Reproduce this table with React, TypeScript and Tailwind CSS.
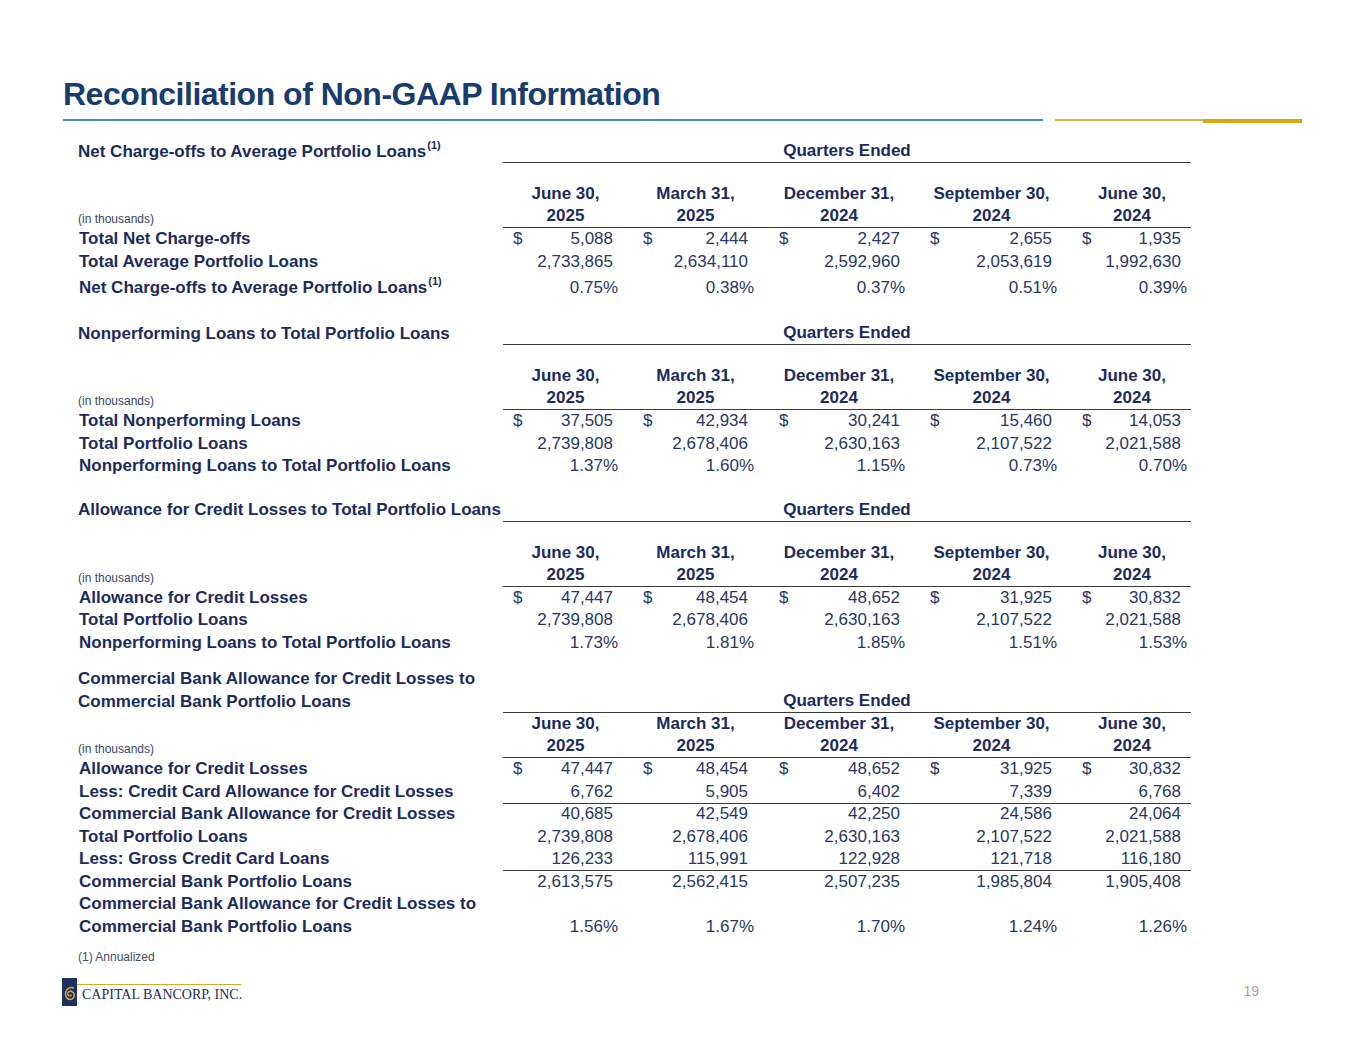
import React from 'react'

/** 表格列宽：标签列 + 5 个季度列 */
const GRID = 'grid grid-cols-[425px_125px_135px_152px_153px_123px]'

const HEADERS: [string, string][] = [
  ['June 30,', '2025'],
  ['March 31,', '2025'],
  ['December 31,', '2024'],
  ['September 30,', '2024'],
  ['June 30,', '2024'],
]

const NUM_PR = ['pr-[15px]', 'pr-[15px]', 'pr-[15px]', 'pr-[16px]', 'pr-[10px]']
const PCT_PR = ['pr-[10px]', 'pr-[9px]', 'pr-[10px]', 'pr-[11px]', 'pr-[4px]']
const DOLLAR_PL = ['pl-[10px]', 'pl-[15px]', 'pl-[16px]', 'pl-[15px]', 'pl-[14px]']
const HEAD_PL = ['pl-[0px]', 'pl-[0px]', 'pl-[0px]', 'pl-[0px]', 'pl-[5px]']

type Kind = 'dollar' | 'num' | 'pct'

interface Row {
  label: React.ReactNode
  values: string[]
  kind: Kind
  /** 行高（覆盖默认） */
  h?: string
  /** 顶部留白 */
  pt?: string
  /** 数据列下方横线 */
  rule?: boolean
  /** 两行标签，数值贴底 */
  tall?: boolean
}

const Sup = () => (
  <sup className="text-[11px] font-bold top-[-0.7em] ml-[1px]">(1)</sup>
)

const LINE = 'border-[#3a3a3a]'

function DataCell({ v, r, i }: { v: string; r: Row; i: number }) {
  return (
    <div
      className={[
        'flex justify-between text-[#2a3763]',
        r.tall ? 'items-end leading-[22.5px]' : 'items-start leading-[22px]',
        r.pt ?? '',
        r.kind === 'dollar' ? DOLLAR_PL[i] : '',
        r.kind === 'pct' ? PCT_PR[i] : NUM_PR[i],
        r.rule ? 'border-b ' + LINE : '',
      ].join(' ')}
    >
      <span>{r.kind === 'dollar' ? '$' : ''}</span>
      <span>{v}</span>
    </div>
  )
}

function Section({
  title,
  twoLineTitle,
  rows,
  rowH = 'h-[22.5px]',
  className,
}: {
  title: React.ReactNode
  twoLineTitle?: boolean
  rows: Row[]
  rowH?: string
  className?: string
}) {
  return (
    <div className={className}>
      {/* 标题行 */}
      <div className={GRID}>
        <div
          className={
            twoLineTitle
              ? 'font-bold leading-[22.5px] text-[#1d2b5c]'
              : 'font-bold leading-[22px] h-[23px] flex items-center text-[#1d2b5c] whitespace-nowrap'
          }
        >
          {title}
        </div>
        <div
          className={
            'col-span-5 self-end text-center font-bold leading-[22px] text-[#1d2b5c] border-b ' + LINE
          }
        >
          Quarters Ended
        </div>
      </div>

      {/* 日期表头 */}
      <div className={GRID + (twoLineTitle ? '' : ' mt-[20px]')}>
        <div className="flex items-end pb-[2px] text-[12px] leading-[14px] text-[#3a4568]">
          (in thousands)
        </div>
        {HEADERS.map(([a, b], i) => (
          <div
            key={i}
            className={
              'text-center font-bold leading-[22px] text-[#1d2b5c] border-b ' + LINE + ' ' + HEAD_PL[i]
            }
          >
            <div>{a}</div>
            <div>{b}</div>
          </div>
        ))}
      </div>

      {/* 数据行 */}
      {rows.map((r, ri) => (
        <div key={ri} className={GRID + ' ' + (r.tall ? '' : r.h ?? rowH)}>
          <div
            className={
              'font-bold text-[#1d2b5c] pl-[1px] whitespace-nowrap ' +
              (r.tall ? 'leading-[22.5px] ' : 'leading-[22px] ') +
              (r.pt ?? '')
            }
          >
            {r.label}
          </div>
          {r.values.map((v, i) => (
            <DataCell key={i} v={v} r={r} i={i} />
          ))}
        </div>
      ))}
    </div>
  )
}

/** 页脚 Logo */
function Logo() {
  return (
    <div className="flex items-start">
      <svg width="15" height="28" viewBox="0 0 15 28" className="shrink-0">
        <rect width="15" height="28" fill="#1f2f5e" />
        <path
          d="M11.5 10 C8.5 8.5 4.5 10.5 3.6 14.5 C2.8 18.5 5.2 21.5 8 21.5 C10.6 21.5 12.2 19.5 12.2 17.1 C12.2 14.7 10.3 13.1 8.2 13.3 C6.3 13.5 5.4 15.1 5.9 16.6 C6.4 18.1 8.4 18.3 9.2 16.9"
          fill="none"
          stroke="#d9ad2b"
          strokeWidth="1.4"
          strokeLinecap="round"
        />
      </svg>
      <div className="flex flex-col">
        <div className="h-[1px] w-[164px] bg-[#d6aa2c] mt-[6px]" />
        <div className="pl-[5px] text-[14px] leading-[20px] text-[#1e2d5a] font-['Liberation_Serif',serif] whitespace-nowrap">
          CAPITAL BANCORP, INC.
        </div>
      </div>
    </div>
  )
}

export default function App() {
  return (
    <div className="w-[1365px] h-[1055px] bg-white font-['Liberation_Sans',Arial,sans-serif] text-[17px] relative overflow-hidden">
      {/* 页面标题 */}
      <div className="pt-[76px] pl-[63px] text-[32px] leading-[36px] tracking-[-0.5px] font-bold text-[#183c6e]">
        Reconciliation of Non-GAAP Information
      </div>
      <div className="mt-[7px] flex items-start pl-[63px]">
        <div className="h-[2px] w-[980px] bg-[#4a88cc]" />
        <div className="ml-[12px] h-[2px] w-[148px] bg-[#e2b334]" />
        <div className="h-[4px] w-[99px] bg-[#d9a911]" />
      </div>

      <div className="pl-[78px]">
        <Section
          className="mt-[17px]"
          rowH="h-[23px]"
          title={
            <span>
              Net Charge-offs to Average Portfolio Loans
              <Sup />
            </span>
          }
          rows={[
            { label: 'Total Net Charge-offs', kind: 'dollar', values: ['5,088', '2,444', '2,427', '2,655', '1,935'] },
            { label: 'Total Average Portfolio Loans', kind: 'num', values: ['2,733,865', '2,634,110', '2,592,960', '2,053,619', '1,992,630'] },
            {
              label: (
                <span>
                  Net Charge-offs to Average Portfolio Loans
                  <Sup />
                </span>
              ),
              kind: 'pct',
              h: 'h-[28px]',
              pt: 'pt-[3px]',
              values: ['0.75%', '0.38%', '0.37%', '0.51%', '0.39%'],
            },
          ]}
        />

        <Section
          className="mt-[20px]"
          title="Nonperforming Loans to Total Portfolio Loans"
          rows={[
            { label: 'Total Nonperforming Loans', kind: 'dollar', values: ['37,505', '42,934', '30,241', '15,460', '14,053'] },
            { label: 'Total Portfolio Loans', kind: 'num', values: ['2,739,808', '2,678,406', '2,630,163', '2,107,522', '2,021,588'] },
            { label: 'Nonperforming Loans to Total Portfolio Loans', kind: 'pct', values: ['1.37%', '1.60%', '1.15%', '0.73%', '0.70%'] },
          ]}
        />

        <Section
          className="mt-[21px]"
          title="Allowance for Credit Losses to Total Portfolio Loans"
          rows={[
            { label: 'Allowance for Credit Losses', kind: 'dollar', values: ['47,447', '48,454', '48,652', '31,925', '30,832'] },
            { label: 'Total Portfolio Loans', kind: 'num', values: ['2,739,808', '2,678,406', '2,630,163', '2,107,522', '2,021,588'] },
            { label: 'Nonperforming Loans to Total Portfolio Loans', kind: 'pct', values: ['1.73%', '1.81%', '1.85%', '1.51%', '1.53%'] },
          ]}
        />

        <Section
          className="mt-[14px]"
          twoLineTitle
          title={
            <>
              <div>Commercial Bank Allowance for Credit Losses to</div>
              <div>Commercial Bank Portfolio Loans</div>
            </>
          }
          rows={[
            { label: 'Allowance for Credit Losses', kind: 'dollar', values: ['47,447', '48,454', '48,652', '31,925', '30,832'] },
            { label: 'Less: Credit Card Allowance for Credit Losses', kind: 'num', rule: true, values: ['6,762', '5,905', '6,402', '7,339', '6,768'] },
            { label: 'Commercial Bank Allowance for Credit Losses', kind: 'num', values: ['40,685', '42,549', '42,250', '24,586', '24,064'] },
            { label: 'Total Portfolio Loans', kind: 'num', values: ['2,739,808', '2,678,406', '2,630,163', '2,107,522', '2,021,588'] },
            { label: 'Less: Gross Credit Card Loans', kind: 'num', rule: true, values: ['126,233', '115,991', '122,928', '121,718', '116,180'] },
            { label: 'Commercial Bank Portfolio Loans', kind: 'num', values: ['2,613,575', '2,562,415', '2,507,235', '1,985,804', '1,905,408'] },
            {
              label: (
                <>
                  <div>Commercial Bank Allowance for Credit Losses to</div>
                  <div>Commercial Bank Portfolio Loans</div>
                </>
              ),
              kind: 'pct',
              tall: true,
              values: ['1.56%', '1.67%', '1.70%', '1.24%', '1.26%'],
            },
          ]}
        />

        <div className="mt-[12px] text-[12px] leading-[14px] text-[#444c66]">(1) Annualized</div>
      </div>

      {/* 页脚 */}
      <div className="mt-[14px] pl-[62px] pr-[106px] flex items-start justify-between">
        <Logo />
        <div className="mt-[4px] text-[14px] leading-[18px] text-[#a3a3a3]">19</div>
      </div>
    </div>
  )
}
